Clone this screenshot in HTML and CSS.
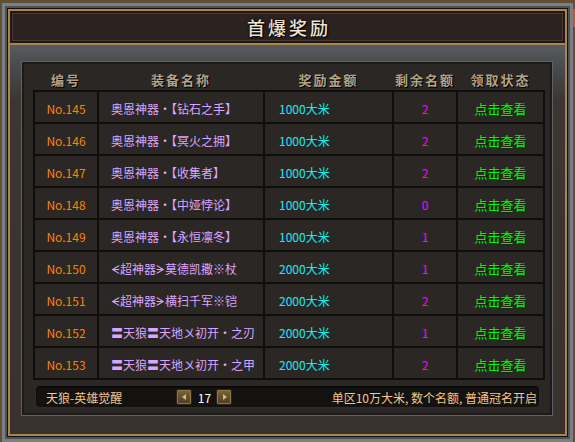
FILE: index.html
```html
<!DOCTYPE html>
<html lang="zh">
<head>
<meta charset="utf-8">
<title>首爆奖励</title>
<link rel="stylesheet" href="styles.css">
</head>
<body>
<div class="close-tab"></div>
<div class="win">
  <div class="win-in">
    <div class="rim">
      <div class="gold">
        <div class="title"><span>首爆奖励</span></div>
        <div class="body">
          <div class="panel">
            <div class="head">
              <div>编号</div>
              <div>装备名称</div>
              <div>奖励金额</div>
              <div>剩余名额</div>
              <div>领取状态</div>
            </div>
            <div class="grid">
              <div class="c no">No.145</div><div class="c name">奥恩神器·【钻石之手】</div><div class="c amt">1000大米</div><div class="c cnt">2</div><div class="c link">点击查看</div>
              <div class="c no">No.146</div><div class="c name">奥恩神器·【冥火之拥】</div><div class="c amt">1000大米</div><div class="c cnt">2</div><div class="c link">点击查看</div>
              <div class="c no">No.147</div><div class="c name">奥恩神器·【收集者】</div><div class="c amt">1000大米</div><div class="c cnt">2</div><div class="c link">点击查看</div>
              <div class="c no">No.148</div><div class="c name">奥恩神器·【中娅悖论】</div><div class="c amt">1000大米</div><div class="c cnt">0</div><div class="c link">点击查看</div>
              <div class="c no">No.149</div><div class="c name">奥恩神器·【永恒凛冬】</div><div class="c amt">1000大米</div><div class="c cnt">1</div><div class="c link">点击查看</div>
              <div class="c no">No.150</div><div class="c name">ᗕ超神器ᗒ莫德凯撒※杖</div><div class="c amt">2000大米</div><div class="c cnt">1</div><div class="c link">点击查看</div>
              <div class="c no">No.151</div><div class="c name">ᗕ超神器ᗒ横扫千军※铠</div><div class="c amt">2000大米</div><div class="c cnt">2</div><div class="c link">点击查看</div>
              <div class="c no">No.152</div><div class="c name">〓天狼〓天地〤初开·之刃</div><div class="c amt">2000大米</div><div class="c cnt">1</div><div class="c link">点击查看</div>
              <div class="c no">No.153</div><div class="c name">〓天狼〓天地〤初开·之甲</div><div class="c amt">2000大米</div><div class="c cnt">2</div><div class="c link">点击查看</div>
            </div>
            <div class="bar">
              <div class="bar-label">天狼-英雄觉醒</div>
              <div class="arrow left"></div>
              <div class="page">17</div>
              <div class="arrow right"></div>
              <div class="bar-note">单区10万大米, 数个名额, 普通冠名开启</div>
            </div>
          </div>
        </div>
      </div>
    </div>
  </div>
</div>
</body>
</html>
```
FILE: styles.css
```css
* { box-sizing: border-box; }
html, body { margin: 0; padding: 0; }
body {
  width: 575px;
  height: 442px;
  overflow: hidden;
  position: relative;
  background: #5f5034;
  font-family: "Noto Sans CJK SC", "Noto Sans", sans-serif;
  font-size: 12px;
}
.close-tab {
  position: absolute;
  right: 0;
  top: 9px;
  width: 2px;
  height: 18px;
  background: #c9552a;
}
.win {
  margin: 3px 0 0 2px;
  width: 571px;
  height: 439px;
  border: 3px solid #7a7f84;
}
.win-in { height: 100%; border: 2px solid #4e5257; }
.rim { height: 100%; border: 1px solid #141211; }
.gold {
  height: 100%;
  border: 2px solid #a8864a;
  display: flex;
  flex-direction: column;
}
.title {
  height: 32px;
  flex: none;
  background: #2c2220;
  box-shadow: inset 0 0 0 2px #211816, inset 0 0 0 3px #4a3a33;
  display: flex;
  align-items: center;
  justify-content: center;
}
.title span {
  color: #ece4d4;
  font-size: 18px;
  font-weight: 500;
  letter-spacing: 3px;
  margin-left: 3px;
  text-shadow: 1px 1px 1px #000, 0 0 3px #000;
}
.body {
  flex: 1;
  border-top: 2px solid #a8864a;
  background: linear-gradient(#575c61 0, #4b4d4f 18px, #3c3631 55px, #39322c 100%);
  padding: 17px 13px 19px 12px;
}
.panel {
  height: 100%;
  border: 2px solid #1c1a19;
  box-shadow: 0 0 0 1px #5e6266;
  background: #2a2725;
  padding: 0 5px 0 9px;
  display: flex;
  flex-direction: column;
}
.head {
  height: 26px;
  flex: none;
  display: grid;
  grid-template-columns: 62px 164px 127px 62px 85px;
  column-gap: 2px;
  padding: 4px 2px 0;
  align-items: center;
  width: 512px;
}
.head div {
  text-align: center;
  font-weight: bold;
  font-size: 13px;
  letter-spacing: 2px;
  color: #b3a385;
  text-shadow: 1px 1px 0 #000;
}
.grid {
  flex: none;
  width: 512px;
  display: grid;
  grid-template-columns: 62px 164px 127px 62px 85px;
  grid-auto-rows: 30px;
  gap: 2px;
  padding: 2px;
  background: #100e0d;
}
.c {
  background: #2a2725;
  display: flex;
  align-items: center;
  padding-top: 2px;
  white-space: nowrap;
}
.no { justify-content: center; color: #ff8000; }
.name { padding-left: 12px; color: #d8a6ff; }
.amt { padding-left: 14px; color: #19eef2; }
.cnt { justify-content: center; color: #ff00ff; }
.link { justify-content: center; color: #00f800; font-size: 13px; text-shadow: 1px 1px 0 #0a2a00; }
.bar {
  margin: 5px 0 0 2px;
  width: 505px;
  height: 23px;
  flex: none;
  background: #141210;
  border: 1px solid #2f2b28;
  border-radius: 5px;
  box-shadow: inset 0 1px 2px #000;
  display: flex;
  align-items: center;
  padding: 0 2px 0 10px;
  color: #f2c78e;
}
.bar-label { width: 130px; padding-top: 1px; }
.arrow {
  width: 16px;
  height: 16px;
  border: 1px solid #2a2212;
  border-radius: 2px;
  background: linear-gradient(#7b6438, #4c3c20);
  box-shadow: inset 0 0 0 1px #8e784a;
  position: relative;
}
.arrow::after {
  content: "";
  position: absolute;
  top: 4px;
  width: 0;
  height: 0;
  border-top: 3.5px solid transparent;
  border-bottom: 3.5px solid transparent;
}
.arrow.left::after { left: 5px; border-right: 4px solid #cbb992; }
.arrow.right::after { left: 6px; border-left: 4px solid #cbb992; }
.page {
  width: 24px;
  text-align: center;
  color: #ffffff;
  padding: 1px 0 0 1px;
}
.bar-note { flex: 1; text-align: right; padding-top: 1px; white-space: pre; }
```
